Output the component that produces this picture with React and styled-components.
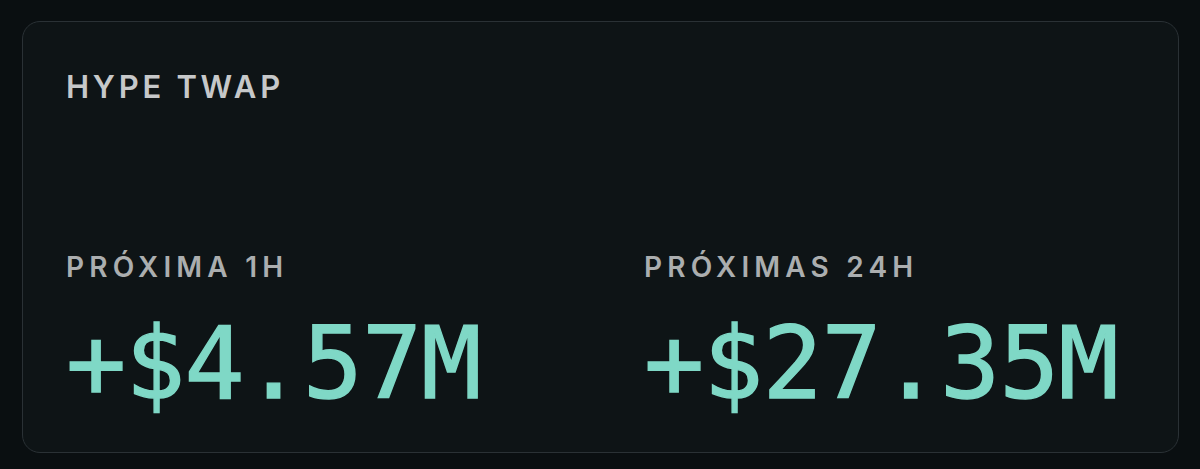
import React from "react";
import styled, { createGlobalStyle } from "styled-components";

const GlobalStyle = createGlobalStyle`
  html, body {
    margin: 0;
    padding: 0;
    background: #0a0f11;
  }
  body {
    font-family: Inter, "Noto Sans", sans-serif;
  }
`;

const Page = styled.div`
  width: 1200px;
  height: 469px;
  box-sizing: border-box;
  padding: 21px 21px 16px 22px;
  background: #0a0f11;
`;

const Card = styled.section`
  box-sizing: border-box;
  height: 432px;
  border: 1.5px solid #2a3135;
  border-radius: 18px;
  background: #0e1416;
  padding: 46px 44px 0 43px;
  display: flex;
  flex-direction: column;
`;

const Title = styled.h2`
  margin: 0;
  font-size: 31px;
  line-height: 38px;
  font-weight: 600;
  letter-spacing: 0.12em;
  color: #c6c8c9;
`;

const Stats = styled.div`
  margin-top: 144px;
  display: grid;
  grid-template-columns: 578px 1fr;
`;

const Stat = styled.div`
  display: flex;
  flex-direction: column;
`;

const Label = styled.div`
  font-size: 28px;
  line-height: 34px;
  font-weight: 600;
  letter-spacing: 0.185em;
  color: #abaeaf;
`;

const Value = styled.div`
  margin-top: 30px;
  font-family: "DejaVu Sans Mono", "Liberation Mono", monospace;
  font-size: 100px;
  line-height: 100px;
  letter-spacing: -1px;
  color: #7fd8c6;
  -webkit-text-stroke: 1.4px #7fd8c6;
`;

const stats = [
  { label: "PRÓXIMA 1H", value: "+$4.57M" },
  { label: "PRÓXIMAS 24H", value: "+$27.35M" },
];

export default function App() {
  return (
    <>
      <GlobalStyle />
      <Page>
        <Card>
          <Title>HYPE TWAP</Title>
          <Stats>
            {stats.map((s) => (
              <Stat key={s.label}>
                <Label>{s.label}</Label>
                <Value>{s.value}</Value>
              </Stat>
            ))}
          </Stats>
        </Card>
      </Page>
    </>
  );
}
